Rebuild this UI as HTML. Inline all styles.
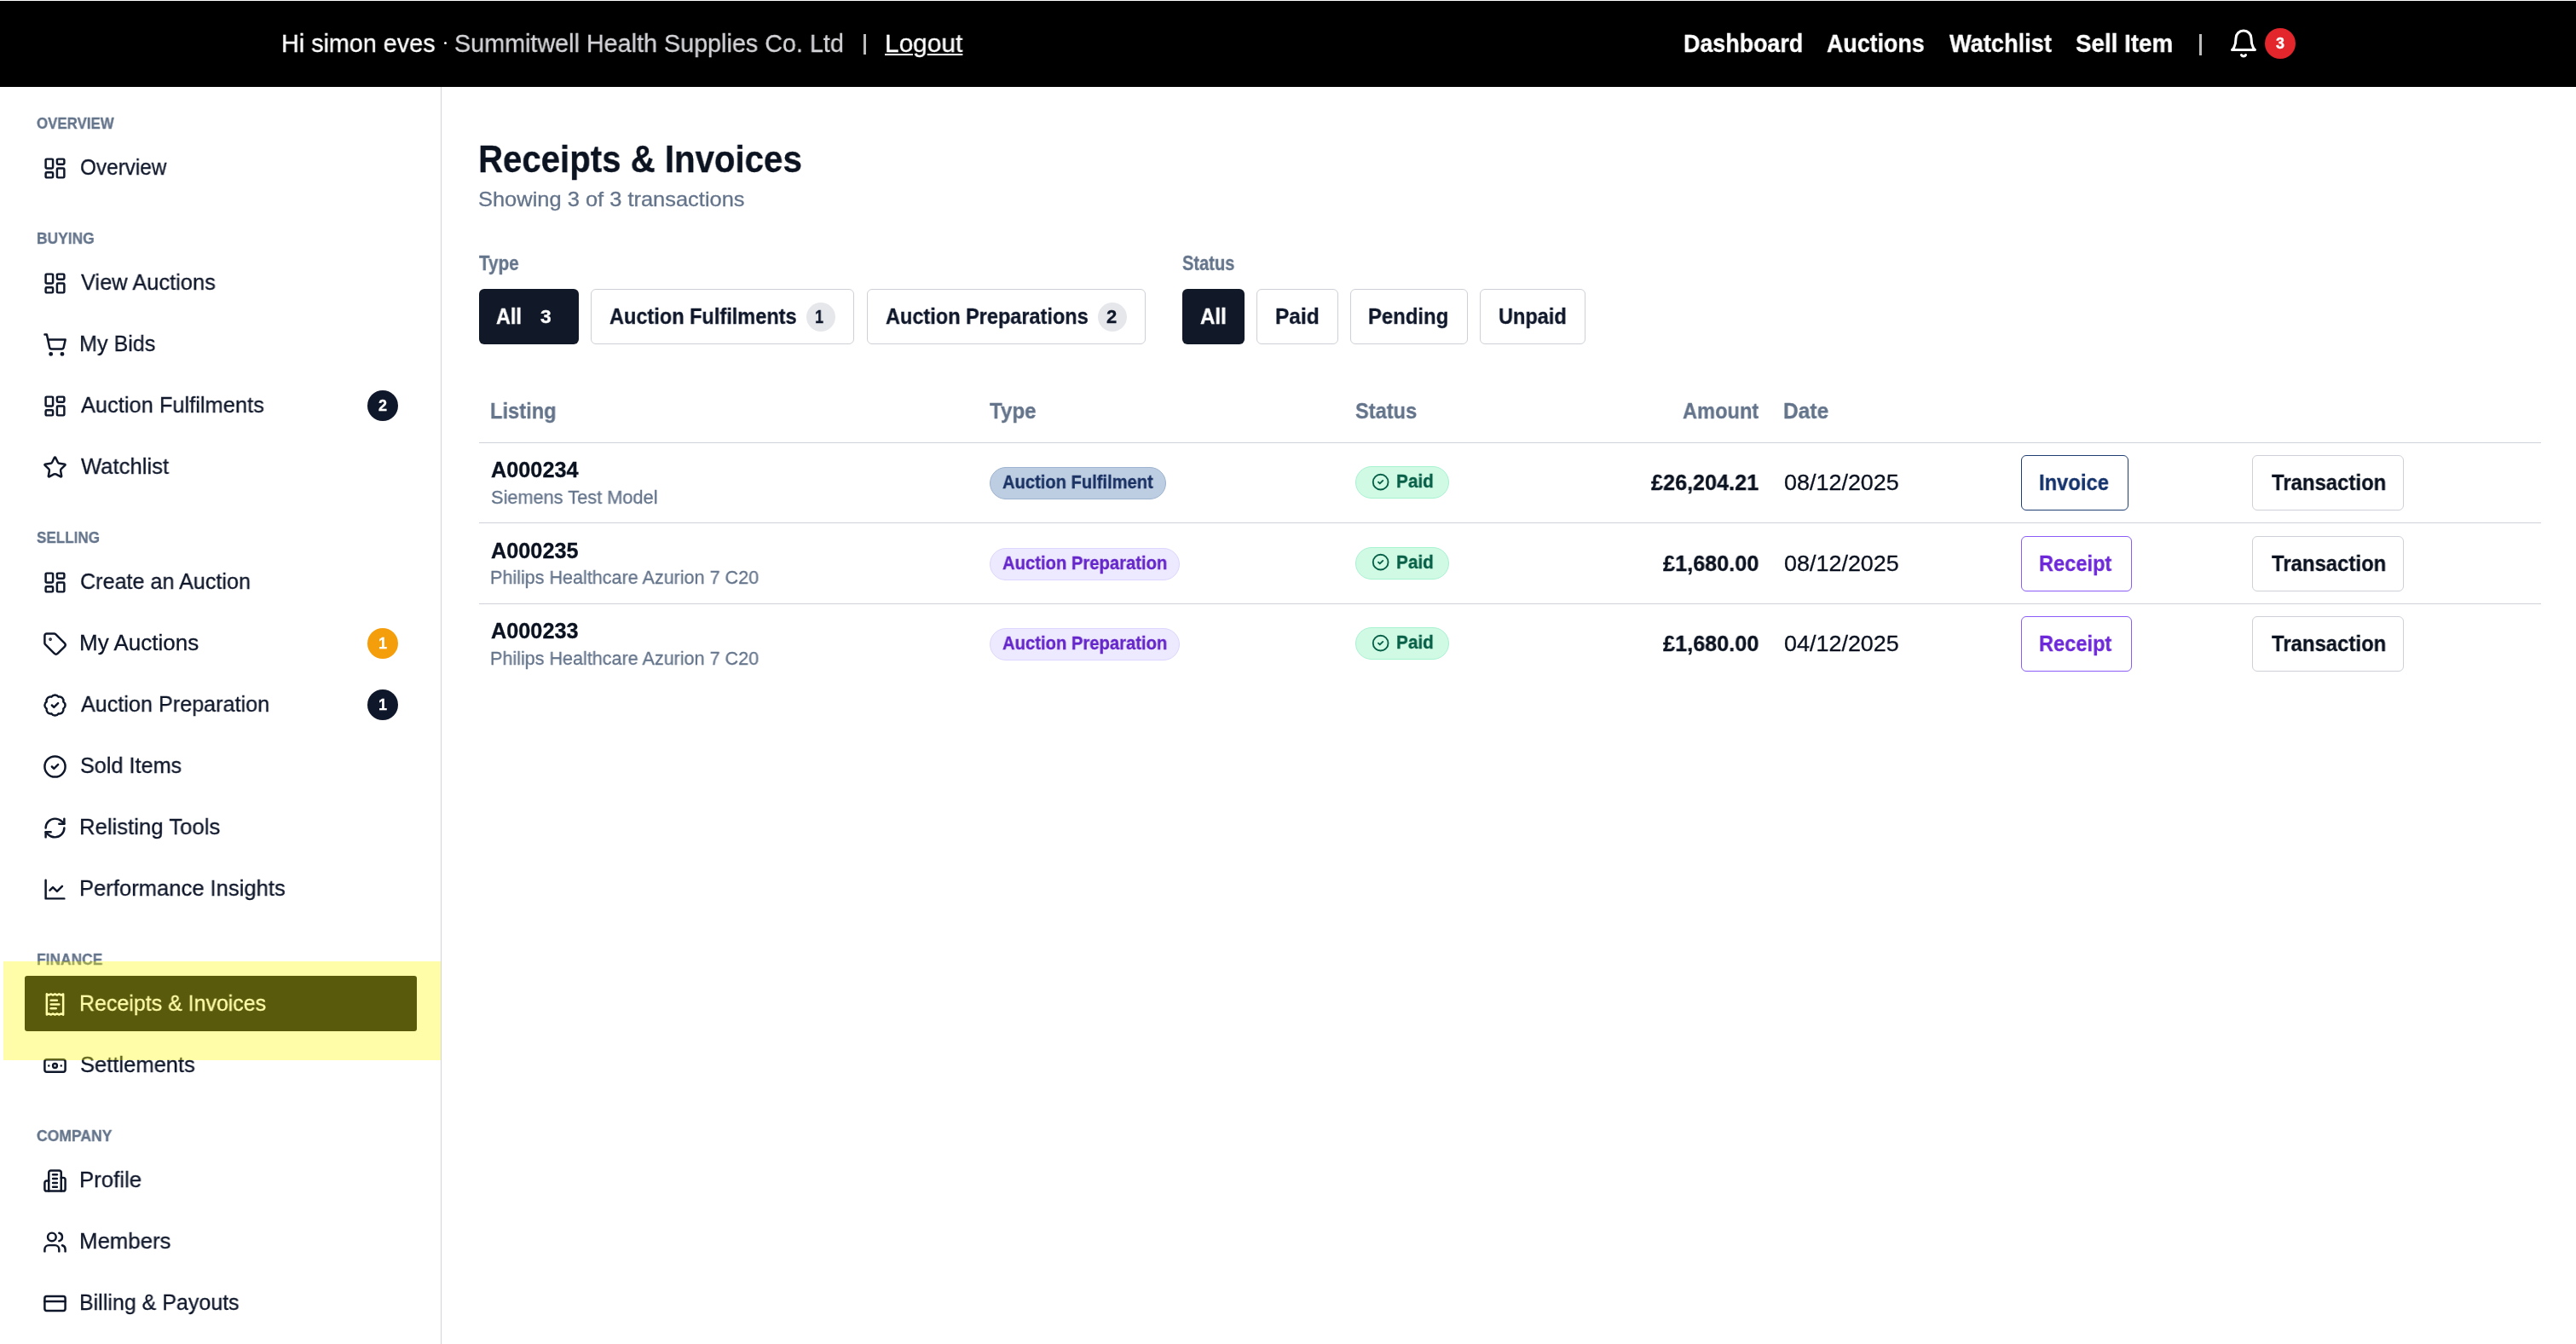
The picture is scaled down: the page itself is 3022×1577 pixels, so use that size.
<!DOCTYPE html>
<html><head><meta charset='utf-8'><title>Receipts &amp; Invoices</title>
<style>
html,body{margin:0;padding:0;background:#fff;width:3022px;height:1577px;overflow:hidden;position:relative}
body{font-family:"Liberation Sans",sans-serif}
.t{position:absolute;white-space:pre;font-family:"Liberation Sans",sans-serif;transform-origin:0 0;will-change:transform;-webkit-text-stroke:0.3px currentColor}
svg{overflow:visible}
</style></head><body>
<div style='position:absolute;left:0px;top:1px;width:3022px;height:101px;box-sizing:border-box;background:#000'></div>
<div style='position:absolute;left:520.6px;top:48.8px;width:3.6px;height:3.6px;border-radius:50%;background:#fff'></div>
<div style='position:absolute;left:1013px;top:40px;width:3px;height:24px;box-sizing:border-box;background:#bdbdbd'></div>
<div style='position:absolute;left:2580px;top:40px;width:3px;height:25px;box-sizing:border-box;background:#bdbdbd'></div>
<svg style='position:absolute;left:2614px;top:33px;' width='36' height='36' viewBox='0 0 24 24' fill='none' stroke='#fff' stroke-width='2' stroke-linecap='round' stroke-linejoin='round'><path d='M6 8a6 6 0 0 1 12 0c0 7 3 9 3 9H3s3-2 3-9'/><path d='M10.3 21a1.94 1.94 0 0 0 3.4 0'/></svg>
<div style='position:absolute;left:2657px;top:33px;width:36px;height:36px;box-sizing:border-box;background:#e3262b;border-radius:50%'></div>
<div class=t style='left:2657px;top:40px;width:36px;text-align:center;font-size:18px;line-height:22px;font-weight:700;color:#fff'>3</div>
<div style='position:absolute;left:517px;top:102px;width:1px;height:1475px;box-sizing:border-box;background:#d4d4d8'></div>
<div style='position:absolute;left:29px;top:1145px;width:460px;height:65px;box-sizing:border-box;background:#060914;border-radius:3px'></div>
<svg style='position:absolute;left:49.6px;top:182.5px;' width='29' height='29' viewBox='0 0 24 24' fill='none' stroke='#0f172a' stroke-width='2.05' stroke-linecap='round' stroke-linejoin='round'><rect width='7' height='9' x='3' y='3' rx='1'/><rect width='7' height='5' x='14' y='3' rx='1'/><rect width='7' height='9' x='14' y='12' rx='1'/><rect width='7' height='5' x='3' y='16' rx='1'/></svg>
<svg style='position:absolute;left:49.6px;top:317.5px;' width='29' height='29' viewBox='0 0 24 24' fill='none' stroke='#0f172a' stroke-width='2.05' stroke-linecap='round' stroke-linejoin='round'><rect width='7' height='9' x='3' y='3' rx='1'/><rect width='7' height='5' x='14' y='3' rx='1'/><rect width='7' height='9' x='14' y='12' rx='1'/><rect width='7' height='5' x='3' y='16' rx='1'/></svg>
<svg style='position:absolute;left:49.6px;top:389.5px;' width='29' height='29' viewBox='0 0 24 24' fill='none' stroke='#0f172a' stroke-width='2.05' stroke-linecap='round' stroke-linejoin='round'><circle cx='8' cy='21' r='1'/><circle cx='19' cy='21' r='1'/><path d='M2.05 2.05h2l2.66 12.42a2 2 0 0 0 2 1.58h9.78a2 2 0 0 0 1.95-1.57l1.65-7.43H5.12'/></svg>
<svg style='position:absolute;left:49.6px;top:461.5px;' width='29' height='29' viewBox='0 0 24 24' fill='none' stroke='#0f172a' stroke-width='2.05' stroke-linecap='round' stroke-linejoin='round'><rect width='7' height='9' x='3' y='3' rx='1'/><rect width='7' height='5' x='14' y='3' rx='1'/><rect width='7' height='9' x='14' y='12' rx='1'/><rect width='7' height='5' x='3' y='16' rx='1'/></svg>
<svg style='position:absolute;left:49.6px;top:533.5px;' width='29' height='29' viewBox='0 0 24 24' fill='none' stroke='#0f172a' stroke-width='2.05' stroke-linecap='round' stroke-linejoin='round'><path d='M11.525 2.295a.53.53 0 0 1 .95 0l2.31 4.679a2.123 2.123 0 0 0 1.595 1.16l5.166.756a.53.53 0 0 1 .294.904l-3.736 3.638a2.123 2.123 0 0 0-.611 1.878l.882 5.14a.53.53 0 0 1-.771.56l-4.618-2.428a2.122 2.122 0 0 0-1.973 0L6.396 21.01a.53.53 0 0 1-.77-.56l.881-5.139a2.122 2.122 0 0 0-.611-1.879L2.16 9.795a.53.53 0 0 1 .294-.906l5.165-.755a2.122 2.122 0 0 0 1.597-1.16z'/></svg>
<svg style='position:absolute;left:49.6px;top:668.5px;' width='29' height='29' viewBox='0 0 24 24' fill='none' stroke='#0f172a' stroke-width='2.05' stroke-linecap='round' stroke-linejoin='round'><rect width='7' height='9' x='3' y='3' rx='1'/><rect width='7' height='5' x='14' y='3' rx='1'/><rect width='7' height='9' x='14' y='12' rx='1'/><rect width='7' height='5' x='3' y='16' rx='1'/></svg>
<svg style='position:absolute;left:49.6px;top:740.5px;' width='29' height='29' viewBox='0 0 24 24' fill='none' stroke='#0f172a' stroke-width='2.05' stroke-linecap='round' stroke-linejoin='round'><path d='M12.586 2.586A2 2 0 0 0 11.172 2H4a2 2 0 0 0-2 2v7.172a2 2 0 0 0 .586 1.414l8.704 8.704a2.426 2.426 0 0 0 3.42 0l6.58-6.58a2.426 2.426 0 0 0 0-3.42z'/><circle cx='7.5' cy='7.5' r='.5' fill='currentColor'/></svg>
<svg style='position:absolute;left:49.6px;top:812.5px;' width='29' height='29' viewBox='0 0 24 24' fill='none' stroke='#0f172a' stroke-width='2.05' stroke-linecap='round' stroke-linejoin='round'><path d='M3.85 8.62a4 4 0 0 1 4.78-4.77 4 4 0 0 1 6.74 0 4 4 0 0 1 4.78 4.78 4 4 0 0 1 0 6.74 4 4 0 0 1-4.77 4.78 4 4 0 0 1-6.75 0 4 4 0 0 1-4.78-4.77 4 4 0 0 1 0-6.76Z'/><path d='m9 12 2 2 4-4'/></svg>
<svg style='position:absolute;left:49.6px;top:884.5px;' width='29' height='29' viewBox='0 0 24 24' fill='none' stroke='#0f172a' stroke-width='2.05' stroke-linecap='round' stroke-linejoin='round'><circle cx='12' cy='12' r='10'/><path d='m9 12 2 2 4-4'/></svg>
<svg style='position:absolute;left:49.6px;top:956.5px;' width='29' height='29' viewBox='0 0 24 24' fill='none' stroke='#0f172a' stroke-width='2.05' stroke-linecap='round' stroke-linejoin='round'><path d='M3 12a9 9 0 0 1 9-9 9.75 9.75 0 0 1 6.74 2.74L21 8'/><path d='M21 3v5h-5'/><path d='M21 12a9 9 0 0 1-9 9 9.75 9.75 0 0 1-6.74-2.74L3 16'/><path d='M8 16H3v5'/></svg>
<svg style='position:absolute;left:49.6px;top:1028.5px;' width='29' height='29' viewBox='0 0 24 24' fill='none' stroke='#0f172a' stroke-width='2.05' stroke-linecap='round' stroke-linejoin='round'><path d='M3 3v18h18'/><path d='m19 9-5 5-4-4-3 3'/></svg>
<svg style='position:absolute;left:49.6px;top:1163.5px;' width='29' height='29' viewBox='0 0 24 24' fill='none' stroke='#ffffff' stroke-width='2.05' stroke-linecap='round' stroke-linejoin='round'><path d='M4 2v20l2-1 2 1 2-1 2 1 2-1 2 1 2-1 2 1V2l-2 1-2-1-2 1-2-1-2 1-2-1-2 1Z'/><path d='M14 8H8'/><path d='M16 12H8'/><path d='M13 16H8'/></svg>
<svg style='position:absolute;left:49.6px;top:1235.5px;' width='29' height='29' viewBox='0 0 24 24' fill='none' stroke='#0f172a' stroke-width='2.05' stroke-linecap='round' stroke-linejoin='round'><rect width='20' height='12' x='2' y='6' rx='2'/><circle cx='12' cy='12' r='2'/><path d='M6 12h.01M18 12h.01'/></svg>
<svg style='position:absolute;left:49.6px;top:1370.5px;' width='29' height='29' viewBox='0 0 24 24' fill='none' stroke='#0f172a' stroke-width='2.05' stroke-linecap='round' stroke-linejoin='round'><path d='M6 22V4a2 2 0 0 1 2-2h8a2 2 0 0 1 2 2v18Z'/><path d='M6 12H4a2 2 0 0 0-2 2v6a2 2 0 0 0 2 2h2'/><path d='M18 9h2a2 2 0 0 1 2 2v9a2 2 0 0 1-2 2h-2'/><path d='M10 6h4'/><path d='M10 10h4'/><path d='M10 14h4'/><path d='M10 18h4'/></svg>
<svg style='position:absolute;left:49.6px;top:1442.5px;' width='29' height='29' viewBox='0 0 24 24' fill='none' stroke='#0f172a' stroke-width='2.05' stroke-linecap='round' stroke-linejoin='round'><path d='M16 21v-2a4 4 0 0 0-4-4H6a4 4 0 0 0-4 4v2'/><circle cx='9' cy='7' r='4'/><path d='M22 21v-2a4 4 0 0 0-3-3.87'/><path d='M16 3.13a4 4 0 0 1 0 7.75'/></svg>
<svg style='position:absolute;left:49.6px;top:1514.5px;' width='29' height='29' viewBox='0 0 24 24' fill='none' stroke='#0f172a' stroke-width='2.05' stroke-linecap='round' stroke-linejoin='round'><rect width='20' height='14' x='2' y='5' rx='2'/><line x1='2' x2='22' y1='10' y2='10'/></svg>
<div style='position:absolute;left:431px;top:457.5px;width:36px;height:36.0px;box-sizing:border-box;background:#0f172a;border-radius:50%'></div>
<div style='position:absolute;left:431px;top:736.5px;width:36px;height:36.0px;box-sizing:border-box;background:#f59e0b;border-radius:50%'></div>
<div style='position:absolute;left:431px;top:808.5px;width:36px;height:36.0px;box-sizing:border-box;background:#0f172a;border-radius:50%'></div>
<div class=t style='left:431px;top:464.5px;width:36px;text-align:center;font-size:18px;line-height:22px;font-weight:700;color:#fff'>2</div>
<div class=t style='left:431px;top:743.5px;width:36px;text-align:center;font-size:18px;line-height:22px;font-weight:700;color:#fff'>1</div>
<div class=t style='left:431px;top:815.5px;width:36px;text-align:center;font-size:18px;line-height:22px;font-weight:700;color:#fff'>1</div>
<div style='position:absolute;left:562px;top:339px;width:117px;height:65px;box-sizing:border-box;background:#111827;border-radius:6px'></div>
<div style='position:absolute;left:693px;top:339px;width:309px;height:65px;box-sizing:border-box;border:1px solid #cdd0d6;border-radius:6px;background:#fff'></div>
<div style='position:absolute;left:1017px;top:339px;width:327px;height:65px;box-sizing:border-box;border:1px solid #cdd0d6;border-radius:6px;background:#fff'></div>
<div style='position:absolute;left:1474px;top:339px;width:96px;height:65px;box-sizing:border-box;border:1px solid #cdd0d6;border-radius:6px;background:#fff'></div>
<div style='position:absolute;left:1584px;top:339px;width:138px;height:65px;box-sizing:border-box;border:1px solid #cdd0d6;border-radius:6px;background:#fff'></div>
<div style='position:absolute;left:1736px;top:339px;width:124px;height:65px;box-sizing:border-box;border:1px solid #cdd0d6;border-radius:6px;background:#fff'></div>
<div style='position:absolute;left:1387px;top:339px;width:73px;height:65px;box-sizing:border-box;background:#111827;border-radius:6px'></div>
<div style='position:absolute;left:946px;top:355px;width:34px;height:34px;box-sizing:border-box;background:#e5e7eb;border-radius:50%'></div>
<div style='position:absolute;left:1288px;top:355px;width:34px;height:34px;box-sizing:border-box;background:#e5e7eb;border-radius:50%'></div>
<div style='position:absolute;left:562px;top:519px;width:2419px;height:1px;box-sizing:border-box;background:#cfd2d9'></div>
<div style='position:absolute;left:562px;top:613px;width:2419px;height:1px;box-sizing:border-box;background:#cfd2d9'></div>
<div style='position:absolute;left:562px;top:708px;width:2419px;height:1px;box-sizing:border-box;background:#cfd2d9'></div>
<div style='position:absolute;left:1161px;top:548px;width:207px;height:38px;box-sizing:border-box;background:#bdcde2;border:1px solid #9db3cf;border-radius:19px'></div>
<div style='position:absolute;left:1590px;top:547px;width:110px;height:38px;box-sizing:border-box;background:#d1fae5;border:1px solid #a7f3d0;border-radius:19px'></div>
<svg style='position:absolute;left:1609.3px;top:554.5px;' width='21.3' height='21.3' viewBox='0 0 24 24' fill='none' stroke='#065f46' stroke-width='2.1' stroke-linecap='round' stroke-linejoin='round'><circle cx='12' cy='12' r='10'/><path d='m9 12 2 2 4-4'/></svg>
<div style='position:absolute;left:2371px;top:534px;width:126px;height:65px;box-sizing:border-box;border:1px solid #1f3f74;border-radius:6px;background:#fff'></div>
<div style='position:absolute;left:2642px;top:534px;width:178px;height:65px;box-sizing:border-box;border:1px solid #cdd0d6;border-radius:6px;background:#fff'></div>
<div style='position:absolute;left:1161px;top:642.6px;width:223px;height:38.0px;box-sizing:border-box;background:#ede9fe;border:1px solid #ddd6fe;border-radius:19px'></div>
<div style='position:absolute;left:1590px;top:641.6px;width:110px;height:38.0px;box-sizing:border-box;background:#d1fae5;border:1px solid #a7f3d0;border-radius:19px'></div>
<svg style='position:absolute;left:1609.3px;top:649.1px;' width='21.3' height='21.3' viewBox='0 0 24 24' fill='none' stroke='#065f46' stroke-width='2.1' stroke-linecap='round' stroke-linejoin='round'><circle cx='12' cy='12' r='10'/><path d='m9 12 2 2 4-4'/></svg>
<div style='position:absolute;left:2371px;top:628.6px;width:130px;height:65.0px;box-sizing:border-box;border:1px solid #8b5cf6;border-radius:6px;background:#fff'></div>
<div style='position:absolute;left:2642px;top:628.6px;width:178px;height:65.0px;box-sizing:border-box;border:1px solid #cdd0d6;border-radius:6px;background:#fff'></div>
<div style='position:absolute;left:1161px;top:737.0px;width:223px;height:38.0px;box-sizing:border-box;background:#ede9fe;border:1px solid #ddd6fe;border-radius:19px'></div>
<div style='position:absolute;left:1590px;top:736.0px;width:110px;height:38.0px;box-sizing:border-box;background:#d1fae5;border:1px solid #a7f3d0;border-radius:19px'></div>
<svg style='position:absolute;left:1609.3px;top:743.5px;' width='21.3' height='21.3' viewBox='0 0 24 24' fill='none' stroke='#065f46' stroke-width='2.1' stroke-linecap='round' stroke-linejoin='round'><circle cx='12' cy='12' r='10'/><path d='m9 12 2 2 4-4'/></svg>
<div style='position:absolute;left:2371px;top:723.0px;width:130px;height:65.0px;box-sizing:border-box;border:1px solid #8b5cf6;border-radius:6px;background:#fff'></div>
<div style='position:absolute;left:2642px;top:723.0px;width:178px;height:65.0px;box-sizing:border-box;border:1px solid #cdd0d6;border-radius:6px;background:#fff'></div>
<div class=t style='left:329.88px;top:35.8px;font-size:30px;line-height:30px;font-weight:400;color:#ffffff;transform:scaleX(0.9581);'>Hi simon eves</div>
<div class=t style='left:533.24px;top:35.8px;font-size:30px;line-height:30px;font-weight:400;color:#d4d4d8;transform:scaleX(0.958);'>Summitwell Health Supplies Co. Ltd</div>
<div class=t style='left:1038.31px;top:35.8px;font-size:30px;line-height:30px;font-weight:400;color:#ffffff;transform:scaleX(0.9944);text-decoration:underline;text-decoration-thickness:2px;text-underline-offset:2px;'>Logout</div>
<div class=t style='left:1975.25px;top:36.65px;font-size:29px;line-height:29px;font-weight:700;color:#ffffff;transform:scaleX(0.925);'>Dashboard</div>
<div class=t style='left:2143.28px;top:36.65px;font-size:29px;line-height:29px;font-weight:700;color:#ffffff;transform:scaleX(0.9238);'>Auctions</div>
<div class=t style='left:2287.0px;top:36.65px;font-size:29px;line-height:29px;font-weight:700;color:#ffffff;transform:scaleX(0.9375);'>Watchlist</div>
<div class=t style='left:2435.04px;top:36.65px;font-size:29px;line-height:29px;font-weight:700;color:#ffffff;transform:scaleX(0.9573);'>Sell Item</div>
<div class=t style='left:42.96px;top:135.8px;font-size:18px;line-height:18px;font-weight:700;color:#64748b;transform:scaleX(0.9375);'>OVERVIEW</div>
<div class=t style='left:42.93px;top:270.8px;font-size:18px;line-height:18px;font-weight:700;color:#64748b;transform:scaleX(0.9676);'>BUYING</div>
<div class=t style='left:42.95px;top:621.8px;font-size:18px;line-height:18px;font-weight:700;color:#64748b;transform:scaleX(0.9487);'>SELLING</div>
<div class=t style='left:42.93px;top:1116.8px;font-size:18px;line-height:18px;font-weight:700;color:#64748b;transform:scaleX(0.9671);'>FINANCE</div>
<div class=t style='left:42.93px;top:1323.8px;font-size:18px;line-height:18px;font-weight:700;color:#64748b;transform:scaleX(0.9742);'>COMPANY</div>
<div class=t style='left:93.66px;top:182.5px;font-size:26px;line-height:26px;font-weight:400;color:#0f172a;transform:scaleX(0.9364);'>Overview</div>
<div class=t style='left:94.6px;top:317.5px;font-size:26px;line-height:26px;font-weight:400;color:#0f172a;transform:scaleX(0.9776);'>View Auctions</div>
<div class=t style='left:92.67px;top:389.5px;font-size:26px;line-height:26px;font-weight:400;color:#0f172a;transform:scaleX(0.9656);'>My Bids</div>
<div class=t style='left:94.6px;top:461.5px;font-size:26px;line-height:26px;font-weight:400;color:#0f172a;transform:scaleX(0.9781);'>Auction Fulfilments</div>
<div class=t style='left:94.6px;top:533.5px;font-size:26px;line-height:26px;font-weight:400;color:#0f172a;transform:scaleX(0.9865);'>Watchlist</div>
<div class=t style='left:93.63px;top:668.5px;font-size:26px;line-height:26px;font-weight:400;color:#0f172a;transform:scaleX(0.9676);'>Create an Auction</div>
<div class=t style='left:92.6px;top:740.5px;font-size:26px;line-height:26px;font-weight:400;color:#0f172a;transform:scaleX(0.9985);'>My Auctions</div>
<div class=t style='left:94.6px;top:812.5px;font-size:26px;line-height:26px;font-weight:400;color:#0f172a;transform:scaleX(0.9683);'>Auction Preparation</div>
<div class=t style='left:93.63px;top:884.5px;font-size:26px;line-height:26px;font-weight:400;color:#0f172a;transform:scaleX(0.9702);'>Sold Items</div>
<div class=t style='left:92.62px;top:956.5px;font-size:26px;line-height:26px;font-weight:400;color:#0f172a;transform:scaleX(0.9884);'>Relisting Tools</div>
<div class=t style='left:92.63px;top:1028.5px;font-size:26px;line-height:26px;font-weight:400;color:#0f172a;transform:scaleX(0.984);'>Performance Insights</div>
<div class=t style='left:92.68px;top:1163.5px;font-size:26px;line-height:26px;font-weight:400;color:#ffffff;transform:scaleX(0.96);'>Receipts &amp; Invoices</div>
<div class=t style='left:93.62px;top:1235.5px;font-size:26px;line-height:26px;font-weight:400;color:#0f172a;transform:scaleX(0.9822);'>Settlements</div>
<div class=t style='left:92.62px;top:1370.5px;font-size:26px;line-height:26px;font-weight:400;color:#0f172a;transform:scaleX(0.9915);'>Profile</div>
<div class=t style='left:92.62px;top:1442.5px;font-size:26px;line-height:26px;font-weight:400;color:#0f172a;transform:scaleX(0.9924);'>Members</div>
<div class=t style='left:92.68px;top:1514.5px;font-size:26px;line-height:26px;font-weight:400;color:#0f172a;transform:scaleX(0.9615);'>Billing &amp; Payouts</div>
<div class=t style='left:561.02px;top:164.2px;font-size:45px;line-height:45px;font-weight:700;color:#0b1220;transform:scaleX(0.8933);'>Receipts &amp; Invoices</div>
<div class=t style='left:561.34px;top:222.3px;font-size:24px;line-height:24px;font-weight:400;color:#64748b;transform:scaleX(1.0601);'>Showing 3 of 3 transactions</div>
<div class=t style='left:562.2px;top:298.0px;font-size:23px;line-height:23px;font-weight:700;color:#64748b;transform:scaleX(0.8961);'>Type</div>
<div class=t style='left:1386.93px;top:298.0px;font-size:23px;line-height:23px;font-weight:700;color:#64748b;transform:scaleX(0.8725);'>Status</div>
<div class=t style='left:582.3px;top:358.2px;font-size:26px;line-height:26px;font-weight:700;color:#ffffff;transform:scaleX(0.9);'>All</div>
<div class=t style='left:633.66px;top:361.0px;font-size:22px;line-height:22px;font-weight:700;color:#ffffff;transform:scaleX(1.0364);'>3</div>
<div class=t style='left:715.4px;top:358.2px;font-size:26px;line-height:26px;font-weight:700;color:#0f172a;transform:scaleX(0.905);'>Auction Fulfilments</div>
<div class=t style='left:956.18px;top:361.0px;font-size:22px;line-height:22px;font-weight:700;color:#0f172a;transform:scaleX(0.8182);'>1</div>
<div class=t style='left:1039.1px;top:358.2px;font-size:26px;line-height:26px;font-weight:700;color:#0f172a;transform:scaleX(0.9042);'>Auction Preparations</div>
<div class=t style='left:1298.0px;top:361.0px;font-size:22px;line-height:22px;font-weight:700;color:#0f172a;transform:scaleX(1.0);'>2</div>
<div class=t style='left:1407.87px;top:358.2px;font-size:26px;line-height:26px;font-weight:700;color:#ffffff;transform:scaleX(0.9258);'>All</div>
<div class=t style='left:1496.12px;top:358.2px;font-size:26px;line-height:26px;font-weight:700;color:#0f172a;transform:scaleX(0.9412);'>Paid</div>
<div class=t style='left:1605.16px;top:358.2px;font-size:26px;line-height:26px;font-weight:700;color:#0f172a;transform:scaleX(0.9192);'>Pending</div>
<div class=t style='left:1758.1px;top:358.2px;font-size:26px;line-height:26px;font-weight:700;color:#0f172a;transform:scaleX(0.9047);'>Unpaid</div>
<div class=t style='left:574.88px;top:469.0px;font-size:26px;line-height:26px;font-weight:700;color:#64748b;transform:scaleX(0.911);'>Listing</div>
<div class=t style='left:1161.3px;top:469.0px;font-size:26px;line-height:26px;font-weight:700;color:#64748b;transform:scaleX(0.9276);'>Type</div>
<div class=t style='left:1589.79px;top:469.0px;font-size:26px;line-height:26px;font-weight:700;color:#64748b;transform:scaleX(0.909);'>Status</div>
<div class=t style='left:1974.49px;top:469.0px;font-size:26px;line-height:26px;font-weight:700;color:#64748b;transform:scaleX(0.9082);'>Amount</div>
<div class=t style='left:2091.91px;top:469.0px;font-size:26px;line-height:26px;font-weight:700;color:#64748b;transform:scaleX(0.9426);'>Date</div>
<div class=t style='left:575.69px;top:539.0px;font-size:25px;line-height:25px;font-weight:700;color:#0b1220;transform:scaleX(1.011);'>A000234</div>
<div class=t style='left:575.71px;top:572.8px;font-size:22px;line-height:22px;font-weight:400;color:#64748b;transform:scaleX(0.9892);'>Siemens Test Model</div>
<div class=t style='left:1175.91px;top:555.1px;font-size:22.5px;line-height:22.5px;font-weight:700;color:#1a3263;transform:scaleX(0.8949);'>Auction Fulfilment</div>
<div class=t style='left:1637.96px;top:554.0px;font-size:22px;line-height:22px;font-weight:700;color:#065f46;transform:scaleX(0.9432);'>Paid</div>
<div class=t style='left:1937.0px;top:553.3px;font-size:26px;line-height:26px;font-weight:700;color:#0b1220;transform:scaleX(0.9692);'>£26,204.21</div>
<div class=t style='left:2092.76px;top:553.3px;font-size:26px;line-height:26px;font-weight:400;color:#0b1220;transform:scaleX(1.0359);'>08/12/2025</div>
<div class=t style='left:2392.37px;top:553.3px;font-size:26px;line-height:26px;font-weight:700;color:#14326b;transform:scaleX(0.9138);'>Invoice</div>
<div class=t style='left:2664.7px;top:553.3px;font-size:26px;line-height:26px;font-weight:700;color:#0b1220;transform:scaleX(0.9201);'>Transaction</div>
<div class=t style='left:575.69px;top:633.6px;font-size:25px;line-height:25px;font-weight:700;color:#0b1220;transform:scaleX(1.011);'>A000235</div>
<div class=t style='left:574.74px;top:667.4px;font-size:22px;line-height:22px;font-weight:400;color:#64748b;transform:scaleX(0.9796);'>Philips Healthcare Azurion 7 C20</div>
<div class=t style='left:1175.9px;top:649.7px;font-size:22.5px;line-height:22.5px;font-weight:700;color:#6425c9;transform:scaleX(0.8991);'>Auction Preparation</div>
<div class=t style='left:1637.96px;top:648.6px;font-size:22px;line-height:22px;font-weight:700;color:#065f46;transform:scaleX(0.9432);'>Paid</div>
<div class=t style='left:1951.3px;top:647.9px;font-size:26px;line-height:26px;font-weight:700;color:#0b1220;transform:scaleX(0.9713);'>£1,680.00</div>
<div class=t style='left:2092.76px;top:647.9px;font-size:26px;line-height:26px;font-weight:400;color:#0b1220;transform:scaleX(1.0359);'>08/12/2025</div>
<div class=t style='left:2392.38px;top:647.9px;font-size:26px;line-height:26px;font-weight:700;color:#6d28d9;transform:scaleX(0.9076);'>Receipt</div>
<div class=t style='left:2664.7px;top:647.9px;font-size:26px;line-height:26px;font-weight:700;color:#0b1220;transform:scaleX(0.9201);'>Transaction</div>
<div class=t style='left:575.69px;top:728.0px;font-size:25px;line-height:25px;font-weight:700;color:#0b1220;transform:scaleX(1.011);'>A000233</div>
<div class=t style='left:574.74px;top:761.8px;font-size:22px;line-height:22px;font-weight:400;color:#64748b;transform:scaleX(0.9796);'>Philips Healthcare Azurion 7 C20</div>
<div class=t style='left:1175.9px;top:744.1px;font-size:22.5px;line-height:22.5px;font-weight:700;color:#6425c9;transform:scaleX(0.8991);'>Auction Preparation</div>
<div class=t style='left:1637.96px;top:743.0px;font-size:22px;line-height:22px;font-weight:700;color:#065f46;transform:scaleX(0.9432);'>Paid</div>
<div class=t style='left:1951.3px;top:742.3px;font-size:26px;line-height:26px;font-weight:700;color:#0b1220;transform:scaleX(0.9713);'>£1,680.00</div>
<div class=t style='left:2092.76px;top:742.3px;font-size:26px;line-height:26px;font-weight:400;color:#0b1220;transform:scaleX(1.0359);'>04/12/2025</div>
<div class=t style='left:2392.38px;top:742.3px;font-size:26px;line-height:26px;font-weight:700;color:#6d28d9;transform:scaleX(0.9076);'>Receipt</div>
<div class=t style='left:2664.7px;top:742.3px;font-size:26px;line-height:26px;font-weight:700;color:#0b1220;transform:scaleX(0.9201);'>Transaction</div>
<div style='position:absolute;left:4px;top:1128px;width:513px;height:116px;background:rgba(255,248,0,0.34)'></div>
</body></html>
